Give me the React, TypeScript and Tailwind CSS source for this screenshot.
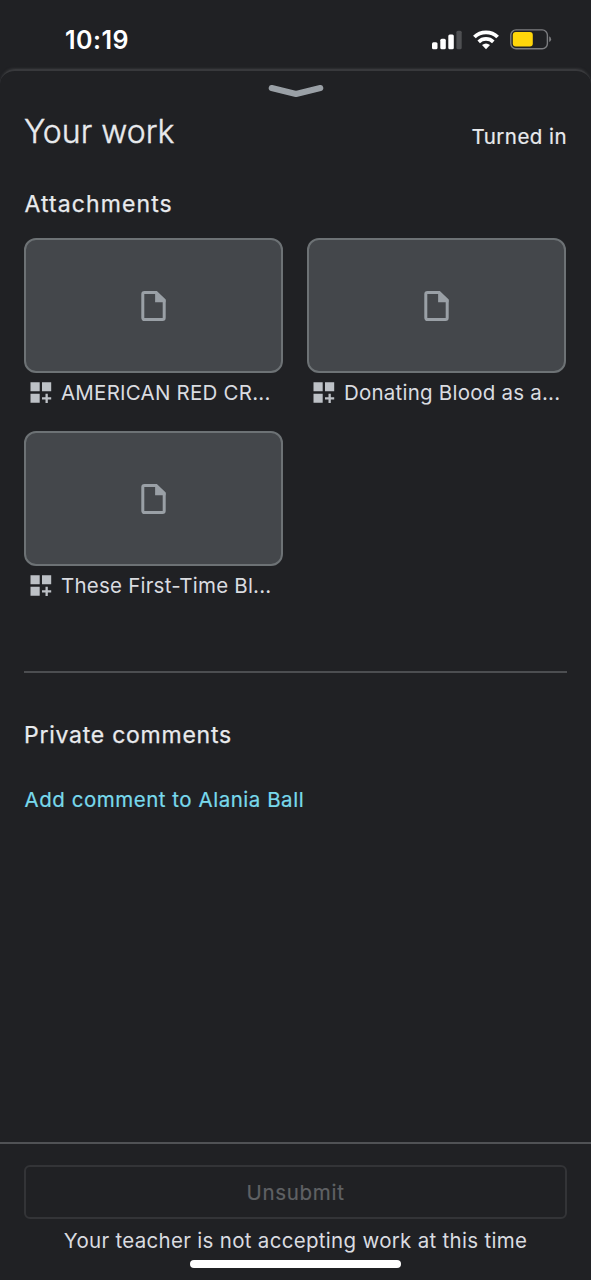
function StatusBar() {
  return (
    <header className="flex h-[69px] shrink-0 items-start justify-between pl-[65px] pr-[39px] pt-[25px]">
      <span className="text-[25px] font-semibold leading-[30px] tracking-[0.5px] text-white">10:19</span>
      <div className="flex h-[29px] items-center">
        <svg width="30" height="20" viewBox="0 0 30 20" fill="#fff">
          <rect x="0" y="12.3" width="5.5" height="7" rx="1.5" />
          <rect x="8.3" y="8.8" width="5.5" height="10.5" rx="1.5" />
          <rect x="16.3" y="4.6" width="5.5" height="14.7" rx="1.5" />
          <rect x="24.4" y="0.8" width="5.3" height="18.5" rx="1.5" fill="#4e4f52" />
        </svg>
        <svg className="ml-[11px]" width="26" height="20" viewBox="0 0 26 20" fill="none" stroke="#fff">
          <path d="M1.4 7 C7.6 0.8 18.4 0.8 24.6 7" strokeWidth="3.8" />
          <path d="M5.7 11.8 C9.8 8 16.2 8 20.3 11.8" strokeWidth="3.7" />
          <path d="M9 15.1 Q13 12.1 17 15.1 L13 19.2 Z" fill="#fff" stroke="none" />
        </svg>
        <svg className="ml-[11px]" width="42" height="21" viewBox="0 0 42 21">
          <rect x="0.8" y="0.9" width="36.6" height="18.8" rx="5.2" fill="none" stroke="#7c7d80" strokeWidth="1.4" />
          <rect x="2.8" y="3.1" width="20" height="14.4" rx="3" fill="#ffd60a" />
          <path d="M39.2 7.3 Q41.1 8.1 41.1 10.2 Q41.1 12.3 39.2 13.1 Z" fill="#7c7d80" />
        </svg>
      </div>
    </header>
  );
}

function FileIcon() {
  return (
    <svg width="26" height="32" viewBox="0 0 26 32" fill="none">
      <path d="M3.5 2.4 H15.2 L23.2 10.2 V27.8 Q23.2 29.5 21.5 29.5 H3.5 Q1.8 29.5 1.8 27.8 V4.1 Q1.8 2.4 3.5 2.4 Z" stroke="#9aa0a6" strokeWidth="3" />
      <path d="M14.1 1.4 H15.8 L24.5 9.9 V12.2 H14.1 Z" fill="#9aa0a6" />
    </svg>
  );
}

function AddOnIcon() {
  return (
    <svg className="mb-[2px] shrink-0" width="22" height="21" viewBox="0 0 22 21" fill="#bdc1c6">
      <path d="M0.5 0.2h9.2v9H0.5z M12 0.2h9.2v9H12z M0.5 11.8h9.2v9H0.5z M15.5 11.8h2.3v3.5h3.4v2.3h-3.4V21h-2.3v-3.4H12v-2.3h3.5z" />
    </svg>
  );
}

function Attachment({ title }: { title: string }) {
  return (
    <article className="flex h-[169px] flex-col">
      <div className="flex h-[135px] shrink-0 items-center justify-center rounded-[12px] border-2 border-[#6d7275] bg-[#44474b]">
        <FileIcon />
      </div>
      <div className="flex h-[40px] shrink-0 items-center gap-[9px] pl-[6px]">
        <AddOnIcon />
        <span className="whitespace-nowrap text-[20.5px] leading-[28px] tracking-[0.22px] text-[#dadce0]">{title}</span>
      </div>
    </article>
  );
}

const attachments = ["AMERICAN RED CR...", "Donating Blood as a...", "These First-Time Bl..."];

export default function App() {
  return (
    <div className="flex h-[1280px] w-[591px] flex-col overflow-hidden bg-[#202124] font-['Inter',sans-serif] text-[#e8eaed]">
      <StatusBar />
      <main className="flex min-h-0 flex-1 flex-col rounded-t-[15px] border-t-2 border-[#38393c] shadow-[0_-1px_2px_#303134]">
        <div className="flex h-[42px] shrink-0 justify-center pt-[13px]">
          <svg width="56" height="15" viewBox="0 0 56 15" fill="none" stroke="#9aa0a6" strokeWidth="6" strokeLinecap="round" strokeLinejoin="round">
            <path d="M3.7 4 L28 10 L52.3 4" />
          </svg>
        </div>
        <div className="flex h-[40px] shrink-0 items-start justify-between pl-[24px] pr-[24px]">
          <h1 className="text-[32px] font-light leading-[38px] tracking-[0px] [-webkit-text-stroke:0.4px]">Your work</h1>
          <span className="pt-[10px] text-[20.5px] font-normal leading-[28px] tracking-[0.45px] [-webkit-text-stroke:0.2px]">Turned in</span>
        </div>
        <h2 className="mt-[36px] pl-[24.5px] text-[23px] font-normal leading-[30px] tracking-[1.1px] [-webkit-text-stroke:0.25px]">Attachments</h2>
        <section className="mt-[19px] grid grid-cols-2 gap-x-[24px] gap-y-[24px] pl-[24px] pr-[25px]">
          {attachments.map((title) => (
            <Attachment key={title} title={title} />
          ))}
        </section>
        <hr className="ml-[24px] mr-[24px] mt-[71px] border-t-2 border-[#4c4e51]" />
        <h2 className="mt-[47px] pl-[24px] text-[23px] font-normal leading-[30px] tracking-[0.75px] [-webkit-text-stroke:0.25px]">Private comments</h2>
        <button className="mt-[36px] self-start pl-[24.5px] text-[20.5px] font-normal leading-[28px] tracking-[0.53px] text-[#78d9ec] [-webkit-text-stroke:0.2px]">
          Add comment to Alania Ball
        </button>
      </main>
      <footer className="flex h-[138px] shrink-0 flex-col items-center border-t-2 border-[#505255] px-[24px] pt-[21px]">
        <button className="h-[54px] w-full shrink-0 rounded-[6px] border-2 border-[#333437] pt-[1px] text-[20.5px] font-normal leading-[28px] tracking-[0.7px] text-[#5f6164] [-webkit-text-stroke:0.2px]">
          Unsubmit
        </button>
        <p className="mt-[8px] whitespace-nowrap text-[20.5px] leading-[28px] tracking-[0.3px] text-[#dadce0]">
          Your teacher is not accepting work at this time
        </p>
        <div className="mt-[5px] h-[8px] w-[211px] shrink-0 rounded-full bg-white" />
      </footer>
    </div>
  );
}
